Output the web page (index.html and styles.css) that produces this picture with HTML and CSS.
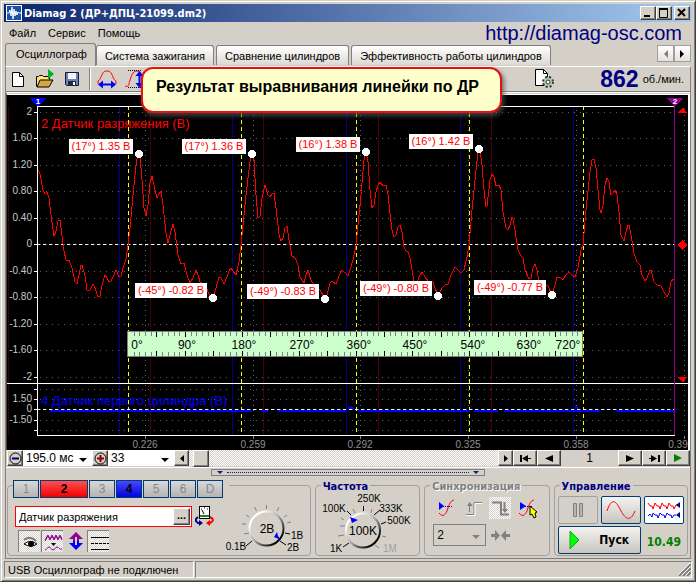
FILE: index.html
```html
<!DOCTYPE html>
<html lang="ru">
<head>
  <meta charset="UTF-8" />
  <title>Diamag 2</title>
  <link rel="stylesheet" href="styles.css">
</head>
<body>
<div class="window">
  <header class="titlebar">
    <svg class="app-icon" width="16" height="16" viewBox="0 0 16 16"><rect width="16" height="16" fill="#fff"/><rect x="1" y="1" width="14" height="14" fill="#1c50a8"/><path d="M1 8h2l1-3 1 6 1-9 1 12 1-10 1 7 1-5 1 4 1-3 1 1h2" fill="none" stroke="#fff"/></svg>
    <h1>Diamag 2 (ДР+ДПЦ-21099.dm2)</h1>
    <div class="win-buttons">
      <button class="btn3d" aria-label="Свернуть"><svg width="12" height="10"><path d="M2 8h6" stroke="#000" stroke-width="2"/></svg></button>
      <button class="btn3d" aria-label="Развернуть"><svg width="12" height="10"><path d="M1.500 1v8.500h8v-8.500" fill="none" stroke="#000"/><path d="M1 1h9" stroke="#000" stroke-width="2"/></svg></button>
      <button class="btn3d close" aria-label="Закрыть"><svg width="12" height="10"><path d="M2 1l7 7M9 1l-7 7" stroke="#000" stroke-width="2"/></svg></button>
    </div>
  </header>

  <nav class="menu">
    <button>Файл</button>
    <button>Сервис</button>
    <button>Помощь</button>
    <a href="http://diamag-osc.com">http://diamag-osc.com</a>
  </nav>

  <div class="tabs">
    <button class="tab active">Осциллограф</button>
    <button class="tab">Система зажигания</button>
    <button class="tab">Сравнение цилиндров</button>
    <button class="tab">Эффективность работы цилиндров</button>
    <div class="tab-scroll">
      <button aria-label="Назад"><svg width="5" height="8"><path d="M5 0v8L1 4z" fill="#808080"/></svg></button>
      <button aria-label="Вперёд"><svg width="5" height="8"><path d="M0 0v8L4 4z"/></svg></button>
    </div>
  </div>

  <main class="page">
    <div class="toolbar">
      <button class="tool" aria-label="Новый"><svg width="20" height="20" viewBox="8 69 20 20"><path d="M12.500 72.500h7l4 4v10h-11z" fill="#fff" stroke="#000"/><path d="M19.500 72.500v4h4" fill="none" stroke="#000"/></svg></button>
      <button class="tool" aria-label="Открыть"><svg width="20" height="20" viewBox="35 69 20 20"><path d="M36.500 86.500v-10h2l1-1h3l1 1h6v3" fill="#ffe27a" stroke="#000"/><path d="M37 87l3-7h13l-4 7z" fill="#d8a840" stroke="#000"/><path d="M48 69v10l6-5z" fill="#00b020"/></svg></button>
      <button class="tool" aria-label="Сохранить"><svg width="20" height="20" viewBox="62 69 20 20"><path d="M65.500 72.500h13v13h-12l-1-1z" fill="#7080b8" stroke="#101838"/><path d="M68 73h8v6h-8z" fill="#f4f4ff"/><path d="M68 81h8v5h-8z" fill="#202840"/><path d="M73 82h2v3h-2z" fill="#fff"/></svg></button>
      <span class="sep"></span>
      <button class="tool" aria-label="По ширине"><svg width="20" height="20" viewBox="97 69 20 20"><path d="M98 84v-3c2-1 2-2 3-4 2-5 3-6 6-6s4 1 6 6c1 2 1 3 3 4v3" fill="none" stroke="#f00"/><path d="M102 84.500h10" stroke="#00f" stroke-width="2"/><path d="M98 84.500l5-4v8zM116 84.500l-5-4v8z" fill="#00f"/></svg></button>
      <button class="tool" aria-label="По высоте"><svg width="20" height="20" viewBox="123 69 20 20"><path d="M127 70.500h14M127 87.500h14" stroke="#000" stroke-dasharray="1 1"/><path d="M124 86c4 2 4-3 5-6 2-7 4-9 7-9s4 3 6 9" fill="none" stroke="#f00"/><path d="M138.500 74v10" stroke="#00f" stroke-width="2"/><path d="M138.500 71l-4 5h8zM138.500 88l-4-5h8z" fill="#00f"/></svg></button>
      <button class="tool settings" aria-label="Настройки"><svg width="20" height="20" viewBox="534 69 20 20"><path d="M535.500 69.500h8l4 4v12h-12z" fill="#fff" stroke="#000"/><path d="M543.500 69.500v4h4" fill="none" stroke="#000"/><circle cx="548" cy="82" r="5" fill="#b8ccb8" stroke="#303830" stroke-width="2" stroke-dasharray="2 2"/><circle cx="548" cy="82" r="2" fill="#fff" stroke="#303830"/></svg></button>
      <p class="rpm"><b>862</b> об./мин.</p>
      <div class="callout">Результат выравнивания линейки по ДР</div>
    </div>

    <div class="scope">
      <svg id="scope" viewBox="7 95 681 355">
        <rect x="7" y="95" width="681" height="355" fill="#000"/>
        <g id="grid"></g>
        <path d="M8.500 106V435" stroke="#400000"/>
        <path d="M119.500 106V435M232.500 106V435M346.500 106V435M460.500 106V435M573.500 106V435" stroke="#00008b"/>
        <path d="M150.500 106V435M263.500 106V435M378.500 106V435M491.500 106V435" stroke="#480000"/>
        <g class="channel-name">
          <text x="41" y="128" fill="#f00">2 Датчик разряжения (В)</text>
          <text x="41" y="405" fill="#0000ff">4 Датчик первого цилиндра (В)</text>
        </g>
        <path d="M128.500 106V433M241.500 106V433M356.500 106V433M469.500 106V433M583.500 106V433" stroke="#ff0" stroke-dasharray="4 3"/>
        <path d="M37 106.500H675M37.500 106V436M37 435.500H675M7 383.500H688" stroke="#fff"/>
        <path d="M50 410.500H252M262 410.500H268M278 410.500H346M358 410.500H470M474 410.500H498M504 410.500H600M616 410.500H675" stroke="#00f" stroke-width="2"/>
        <path d="M348 409v-3l2 2 1-2 2 2h2v1zM575 409v-4l2 2 2 1v1z" fill="#00f"/>
        <path d="M37 244.500H675M37 409.500H675" stroke="#fff" stroke-dasharray="3 3"/>
        <g id="wave"></g>
        <path d="M674.500 100V435" stroke="#900090"/>
        <g id="ruler"></g>
        <g id="peaks"></g>
        <path d="M29 98h17l-8 8z" fill="#00f"/>
        <path d="M666 98h17l-8 8z" fill="#900090"/>
        <g class="flag"><text x="38" y="104">1</text><text x="675" y="104">2</text></g>
        <path d="M678 113h9l-4-6zM678 377h9l-4 6zM682.500 240l5 5-5 5-5-5z" fill="#f00"/>
      </svg>
    </div>

    <div class="scrollrow">
      <button class="btn3d zoom" aria-label="Уменьшить"><svg width="13" height="13"><circle cx="6.500" cy="6.500" r="5.500" fill="none" stroke="#000"/><path d="M3 6.500h7" stroke="#000080" stroke-width="2"/></svg></button>
      <div class="combo time"><select aria-label="Время"><option>195.0 мс</option></select></div>
      <button class="btn3d zoom" aria-label="Увеличить"><svg width="13" height="13"><circle cx="6.500" cy="6.500" r="5.500" fill="none" stroke="#000"/><path d="M3 6.500h7M6.500 3v7" stroke="#900000" stroke-width="2"/></svg></button>
      <div class="combo count"><select aria-label="Масштаб"><option>33</option></select></div>
      <button class="btn3d left" aria-label="Влево"><svg width="4" height="7"><path d="M4 0v7L0 3.500z"/></svg></button>
      <input class="scroll" type="range" min="0" max="290" value="4" aria-label="Прокрутка">
      <button class="btn3d" aria-label="Вправо"><svg width="4" height="7"><path d="M0 0v7l4-3.500z"/></svg></button>
      <button class="btn3d nav" aria-label="Первый"><svg width="11" height="7"><path d="M0 0h2v7H0zM8 0v7L2 3.500zM8 3h3v1H8z"/></svg></button>
      <button class="btn3d nav" aria-label="Предыдущий"><svg width="9" height="7"><path d="M8 0v7L0 3.500z"/></svg></button>
      <output class="frame-no">1</output>
      <button class="btn3d nav" aria-label="Следующий"><svg width="9" height="7"><path d="M0 0v7l8-3.500z"/></svg></button>
      <button class="btn3d nav" aria-label="Последний"><svg width="11" height="7"><path d="M9 0h2v7H9zM2 0v7l6-3.500zM0 3h2v1H0z"/></svg></button>
      <button class="btn3d nav" aria-label="Воспроизвести"><svg width="9" height="8"><path d="M0 0v8l8-4z" fill="#008000"/></svg></button>
    </div>

    <button class="splitter" aria-label="Свернуть панель"><i></i><span></span><i></i></button>

    <div class="panels">
      <section class="group channels">
        <div class="channel-row">
          <button>1</button><button class="red">2</button><button>3</button><button class="blue">4</button><button>5</button><button>6</button><button>D</button>
        </div>
        <div class="channel-body">
          <div class="channel-left">
            <div class="sensor-row">
              <div class="sensor"><input type="text" value="Датчик разряжения" aria-label="Датчик"><button class="btn3d" aria-label="Выбрать">...</button></div>
              <button class="tool" aria-label="Калибровка"><svg width="20" height="20" viewBox="195 508 20 20"><rect x="199.500" y="508.500" width="10" height="12" fill="#fff" stroke="#000"/><path d="M200 517h9v2h-9z" fill="#208030"/><path d="M204 516l-2-4M201 511h1M204 510h1M207 511h1" stroke="#000"/><path d="M198 519c-3 2-3 4 0 6h2" fill="none" stroke="#000080" stroke-width="2"/><path d="M199 522v6l4-3z" fill="#000080"/><path d="M210 519c4 2 4 4 0 6h-1" fill="none" stroke="#f00" stroke-width="2"/><path d="M210 522v6l-4-3z" fill="#f00"/></svg></button>
            </div>
            <div class="toggle-row">
              <button class="toggle" aria-label="Показать"><svg width="20" height="20" viewBox="0 0 20 20"><path d="M4 8q6-5 12 1" fill="none" stroke="#777" stroke-width="2"/><path d="M4 12q6-5 13 0-6 4-13 0z" fill="#fff" stroke="#000"/><circle cx="11" cy="12" r="3"/></svg></button>
              <button class="toggle" aria-label="Сглаживание"><svg width="20" height="20" viewBox="0 0 20 20"><path d="M2 8l3-5 2 4 2-4 2 4 2-4 2 4 2-4 2 4" fill="none" stroke="#900090"/><path d="M2 9l3-5 2 4 2-4 2 4 2-4 2 4 2-4 2 4" fill="none" stroke="#900090"/><path d="M8 11h5l-2.500 3z"/><path d="M2 18c2 0 2-3 4-3s2 3 4 3 2-3 4-3 2 3 5 2" fill="none" stroke="#900090"/></svg></button>
              <button class="plain" aria-label="Инвертировать"><svg width="16" height="20" viewBox="0 0 16 20"><path d="M8 1l7 7h-4v2H5V8H1z" fill="#900090"/><path d="M8 19l7-7h-4v-2H5v2H1z" fill="#00f"/><path d="M8 6v8" stroke="#d4d0c8" stroke-width="2"/></svg></button>
              <button class="toggle" aria-label="Уровни"><svg width="20" height="20" viewBox="0 0 20 20"><path d="M2 5.500h18M2 17.500h18" stroke="#000"/><path d="M2 11.500h18" stroke="#000" stroke-dasharray="3 1"/></svg></button>
            </div>
          </div>
          <svg class="knob" width="92" height="55" viewBox="216 500 92 55">
            <defs><linearGradient id="rim" x1="0" y1="0" x2="1" y2="1"><stop offset="0.200" stop-color="#fff"/><stop offset="0.500" stop-color="#a8a8a8"/><stop offset="0.850" stop-color="#000"/></linearGradient></defs>
            <path d="M260.500 511v-4M250.500 513l-2-4M271 513l2-4M243 519l-3-2M278 519l3-2M240 526h-4M281 525l4-1M238 536l5-1" stroke="#808080"/>
            <path d="M246 543l-6 5M274 543l6 4M279 535l5 1" fill="none" stroke="#000"/>
            <circle cx="260.500" cy="530.500" r="17" fill="#d4d0c8" stroke="url(#rim)" stroke-width="2"/>
            <path d="M268 539l3-5 1 4 3 4z" fill="#00f"/>
            <text class="big" x="261" y="535">2В</text>
            <text x="230" y="552">0.1В</text><text x="291" y="541">1В</text><text x="287" y="553">2В</text>
          </svg>
        </div>
      </section>

      <section class="group freq">
        <h2>Частота</h2>
        <svg class="knob" width="102" height="62" viewBox="317 492 102 62">
          <path d="M356 513l-2-4M372 513l1-4M346 526h-5M345 520l-3-2M345 535l-6 1M383 536l4 1M376 545l4 3" stroke="#808080"/>
          <path d="M364.500 511v-5M352 515l-4-4M375 515l6-5M382 524l5-2M350 543l-6 4" stroke="#000"/>
          <circle cx="364" cy="530.500" r="17" fill="#d4d0c8" stroke="url(#rim)" stroke-width="2"/>
          <path d="M351 517l8 3-6 3z" fill="#00f"/>
          <text class="big" x="364" y="535">100K</text>
          <text x="370" y="502">250K</text><text x="335" y="512">100K</text><text x="392" y="512">333K</text><text x="400" y="524">500K</text><text x="337" y="552">1K</text><text class="off" x="391" y="552">1M</text>
        </svg>
      </section>

      <section class="group sync">
        <h2>Синхронизация</h2>
        <div class="sync-icons">
          <button aria-label="Уровень"><svg width="22" height="22" viewBox="0 0 22 22"><path d="M4 16c4 5 7 2 9-5 2-6 3-7 6-8" fill="none" stroke="#f00"/><path d="M6 9.500h12" stroke="#00f" stroke-dasharray="1 1"/><path d="M4 5v8l5-4z" fill="#00f"/></svg></button>
          <button aria-label="Фронт"><svg width="22" height="22" viewBox="0 0 22 22"><path d="M4 17.500h8v-12h8M7.500 15V6" fill="none" stroke="#808080"/><path d="M4 18.500h9v-12h7" fill="none" stroke="#fff"/><path d="M5 9h6L7.500 5z" fill="#808080"/></svg></button>
          <button class="on" aria-label="Спад"><svg width="22" height="22" viewBox="0 0 22 22"><path d="M3 5.500h9v12h8M15.500 5v8" fill="none" stroke="#808080" stroke-width="2"/><path d="M13 12h6l-3 4z" fill="#808080"/></svg></button>
          <button aria-label="Установить"><svg width="22" height="22" viewBox="0 0 22 22"><path d="M2 16c4 5 7 2 9-5 2-6 3-7 6-8" fill="none" stroke="#f00"/><path d="M8 9.500h8" stroke="#00f" stroke-dasharray="1 1"/><path d="M3 5v8l6-4z" fill="#00f"/><path d="M13 9v9l2-1 2 4 2-1-1-4 2-1z" fill="#ff0" stroke="#000"/></svg></button>
        </div>
        <div class="sync-row">
          <div class="combo disabled"><select aria-label="Канал синхронизации" disabled><option>2</option></select></div>
          <svg width="20" height="11"><path d="M0 4h4V0l5 5.500L4 11V7H0zM19 4h-4V0l-5 5.500 5 5.500V7h4z" fill="#808080"/></svg>
        </div>
      </section>

      <section class="group control">
        <h2>Управление</h2>
        <div class="control-grid">
          <button class="xp dim" aria-label="Пауза"><svg width="12" height="16"><path d="M1.500 1.500h3v13h-3zM7.500 1.500h3v13h-3z" fill="#b4b4b4" stroke="#808080"/></svg></button>
          <button class="xp" aria-label="Один канал"><svg width="32" height="20"><path d="M2 11C6-1 10-1 15 9s10 14 15 2" fill="none" stroke="#f00"/></svg></button>
          <button class="xp lit" aria-label="Два канала"><svg width="34" height="20"><path d="M1 3l2 3 2 0 1 3 2-6 2 3 2 0 1 3 2-6 2 3 2 0 1 3 2-6 2 3 2 0 1 3 2-4h2" fill="none" stroke="#f00"/><path d="M1 16l2-2 2 3 1-4 2 2 2 0 1 3 2-5 2 2 2 0 1 3 2-5 2 2 2 0 1 3 2-3h2" fill="none" stroke="#00f"/><path d="M33 2v6l-4-3zM33 12v6l-4-3z" fill="#000080"/></svg></button>
          <button class="xp start"><svg width="11" height="20"><path d="M1 1v18l9-9z" fill="#0f0" stroke="#20a020"/></svg>Пуск</button>
          <output>10.49</output>
        </div>
      </section>
    </div>
  </main>

  <footer class="status">
    <div>USB Осциллограф не подключен</div>
    <div><svg width="13" height="13"><path d="M1 13L13 1M5 13l8-8M9 13l4-4" stroke="#808080" stroke-width="2"/><path d="M0 12L12 0M4 12l8-8M8 12l4-4" stroke="#fff"/></svg></div>
  </footer>
</div>
<script src="scope.js"></script>
</body>
</html>
```
FILE: styles.css
```css
* {
  box-sizing: border-box;
}

body {
  margin: 0;
  background: #d4d0c8;
  font-family: "Liberation Sans", Arial, sans-serif;
  font-size: 11px;
  color: #000;
}

button, select, input {
  font: inherit;
  color: inherit;
  margin: 0;
  padding: 0;
  border-radius: 0;
}

button {
  display: flex;
  align-items: center;
  justify-content: center;
  border: 0;
  background: none;
}

svg {
  display: block;
  flex: none;
}

h1, h2, p {
  margin: 0;
  font-size: 11px;
}

.window {
  background: #d4d0c8;
  border: 1px solid;
  border-color: #d4d0c8 #404040 #404040 #d4d0c8;
  box-shadow: inset 1px 1px #fff, inset -1px -1px #808080;
  padding: 3px;
}

.btn3d {
  background: #d4d0c8;
  border: 1px solid;
  border-color: #fff #404040 #404040 #fff;
  box-shadow: inset -1px -1px #808080;
}

/* title and menu */
.titlebar {
  display: flex;
  align-items: center;
  height: 18px;
  padding: 0 2px;
  gap: 2px;
  background: linear-gradient(to right, #0a246a, #a6caf0);
  color: #fff;
}

.titlebar h1 {
  font-family: "DejaVu Sans Condensed", "DejaVu Sans", sans-serif;
}

.win-buttons {
  display: flex;
  margin-left: auto;
}

.win-buttons button {
  width: 16px;
  height: 14px;
}

.win-buttons .close {
  margin-left: 2px;
}

.menu {
  display: flex;
  align-items: center;
  gap: 12px;
  height: 21px;
  padding: 0 10px 0 5px;
}

.menu a {
  margin-left: auto;
  font-size: 20px;
  line-height: 20px;
  color: #000080;
  text-decoration: none;
}

/* tabs */
.tabs {
  display: flex;
  align-items: flex-end;
  gap: 2px;
  height: 23px;
  padding: 0 1px;
}

.tab {
  height: 20px;
  margin-bottom: 1px;
  padding: 0 8px;
  white-space: nowrap;
  border: 1px solid #808080;
  border-bottom: 0;
  border-radius: 3px 3px 0 0;
  background: linear-gradient(#fff, #dcd9d2);
}

.tab.active {
  height: 23px;
  margin: 0 -2px 0 0;
  padding: 0 8px 2px 10px;
  background: #d4d0c8;
}

.tab-scroll {
  display: flex;
  align-self: flex-start;
  margin: 2px 0 0 auto;
}

.tab-scroll button {
  width: 17px;
  height: 17px;
  border: 1px solid #a0a0a0;
  background: linear-gradient(#fff, #e4e2dc);
}

/* page */
.page {
  margin: 0 1px;
  border: 1px solid #808080;
  border-top: 1px solid #fff;
}

.toolbar {
  position: relative;
  display: flex;
  align-items: center;
  height: 25px;
  padding: 0 6px 0 2px;
  border-bottom: 1px solid #808080;
}

.tool {
  width: 20px;
  height: 20px;
  margin-right: 7px;
}

.sep {
  width: 2px;
  height: 22px;
  margin: 0 6px 0 0;
  border-left: 1px solid #808080;
  border-right: 1px solid #fff;
}

.settings {
  margin: 0 0 0 auto;
}

.rpm {
  display: flex;
  align-items: center;
  gap: 4px;
  margin-left: 46px;
}

.rpm b {
  font-size: 23px;
  line-height: 24px;
  color: #000080;
}

.callout {
  position: absolute;
  z-index: 2;
  left: 135px;
  top: 0;
  width: 361px;
  height: 46px;
  padding: 8px 13px;
  border: 2px solid #e81010;
  border-radius: 12px;
  background: #ffffcc;
  box-shadow: 2px 3px 5px rgba(80, 80, 80, 0.8);
  font-size: 16px;
  font-weight: bold;
  line-height: 20px;
  white-space: nowrap;
}

/* oscilloscope screen */
.scope {
  border: solid;
  border-width: 3px 2px 0 1px;
  border-color: #fff #fff #fff #404040;
  border-top-style: double;
}

.scope svg {
  width: 100%;
  height: auto;
  font-size: 10px;
  shape-rendering: crispEdges;
}

.axis-y {
  fill: #c8c8c8;
  text-anchor: end;
}

.axis-x {
  fill: #909090;
  text-anchor: middle;
}

.channel-name {
  font-size: 13px;
}

.peak {
  fill: #f00;
  font-size: 11px;
  text-anchor: middle;
}

.degree {
  font-size: 12px;
  text-anchor: middle;
}

.flag {
  fill: #fff;
  font-size: 8px;
  font-weight: bold;
  text-anchor: middle;
}

/* scroll row */
.scrollrow {
  display: flex;
  height: 18px;
  padding: 0 0 1px 1px;
  border-bottom: 1px solid #fff;
  font-size: 12px;
}

.scrollrow .btn3d {
  width: 15px;
}

.scrollrow .zoom {
  width: 16px;
}

.scrollrow .nav {
  width: 24px;
}

.combo {
  position: relative;
  background: #fff;
}

.combo select {
  width: 100%;
  height: 100%;
  padding: 0 3px;
  border: 0;
  background: none;
  appearance: none;
  opacity: 1;
}

.combo::after {
  content: "";
  position: absolute;
  right: 5px;
  top: 50%;
  border: 4px solid transparent;
  border-top-color: #000;
  border-bottom: 0;
  pointer-events: none;
}

.time {
  width: 69px;
}

.count {
  width: 66px;
}

.scroll {
  flex: 1;
  min-width: 0;
  appearance: none;
  background: repeating-conic-gradient(#fff 0 25%, #d4d0c8 0 50%) 0 0 / 2px 2px;
}

.scroll::-webkit-slider-thumb {
  appearance: none;
  width: 16px;
  height: 17px;
  background: #d4d0c8;
  border: 1px solid;
  border-color: #fff #404040 #404040 #fff;
  box-shadow: inset -1px -1px #808080;
}

.frame-no {
  width: 57px;
  text-align: center;
  line-height: 17px;
}

.splitter {
  width: 274px;
  height: 7px;
  margin: 1px auto 0;
  padding: 0 5px;
  gap: 4px;
  border: 1px solid #808080;
}

.splitter i {
  border: 3px solid transparent;
  border-top-color: #0a246a;
  border-bottom: 0;
}

.splitter span {
  flex: 1;
  border-top: 1px dotted #0a246a;
}

/* control panels */
.panels {
  display: grid;
  grid-template-columns: 305fr 106fr 126fr 135fr;
  gap: 4px;
  padding: 9px 2px 2px 1px;
}

.group {
  height: 71px;
  min-width: 0;
  border: 1px solid #a0a0a0;
  border-radius: 4px;
}

.group h2 {
  width: max-content;
  height: 14px;
  margin: -8px 0 0 5px;
  padding: 0 2px;
  line-height: 18px;
  background: #d4d0c8;
  font-family: "DejaVu Sans Condensed", "DejaVu Sans", sans-serif;
  color: #000080;
}

.channel-row {
  display: flex;
  gap: 1px;
  width: max-content;
  margin: -6px 0 0 5px;
  padding-right: 6px;
  background: #d4d0c8;
  font-size: 12px;
}

.channel-row button {
  width: 26px;
  height: 18px;
  border: 1px solid #003c74;
  background: linear-gradient(#d8d8d8, #b4b4b4);
  color: #888;
}

.channel-row .red {
  width: 48px;
  background: linear-gradient(#ff5050, #f00000);
  color: #000;
  font-weight: bold;
}

.channel-row .blue {
  background: linear-gradient(#4848ff, #0000e0);
  color: #000;
  font-weight: bold;
}

.channel-body {
  display: flex;
  justify-content: space-between;
}

.channel-left {
  padding: 8px 0 0 7px;
}

.sensor-row, .toggle-row {
  display: flex;
}

.sensor {
  display: flex;
  width: 177px;
  height: 21px;
  margin-right: 3px;
  padding: 1px;
  border: 1px solid #f00;
  background: #fff;
}

.sensor input {
  flex: 1;
  min-width: 0;
  padding: 0 2px;
  border: 0;
  background: none;
}

.sensor button {
  width: 17px;
  padding-bottom: 4px;
  font-weight: bold;
}

.toggle-row {
  padding: 3px 0 0 3px;
  gap: 1px;
}

.toggle {
  width: 22px;
  height: 22px;
  border-left: 1px solid #808080;
  border-top: 1px solid #808080;
  background: repeating-conic-gradient(#fff 0 25%, #d4d0c8 0 50%) 0 0 / 2px 2px;
}

.plain {
  margin: 0 2px 0 4px;
}

.knob {
  font-size: 10px;
  text-anchor: middle;
}

.knob .big {
  font-size: 12px;
}

.knob .off {
  fill: #a0a0a0;
}

.freq .knob {
  margin: 0 auto;
}

.sync h2 {
  color: #808080;
  text-shadow: 1px 1px #fff;
}

.sync-icons {
  display: flex;
  justify-content: space-between;
  padding: 5px 10px 0;
}

.sync-icons .on {
  background: repeating-conic-gradient(#fff 0 25%, #d4d0c8 0 50%) 0 0 / 2px 2px;
}

.sync-row {
  display: flex;
  align-items: center;
  gap: 5px;
  padding: 5px 8px 0;
}

.combo.disabled {
  width: 53px;
  height: 22px;
  border: 1px solid #808080;
  background: none;
  font-size: 12px;
}

.combo.disabled::after {
  border-top-color: #808080;
}

.control-grid {
  display: grid;
  grid-template-columns: repeat(3, 1fr);
  gap: 2px 3px;
  padding: 4px 3px 0;
}

.xp {
  height: 28px;
  border: 1px solid #003c74;
  border-radius: 2px;
  background: linear-gradient(#f4f3f0, #c8c5be);
}

.xp.dim {
  border-color: #a0a0a0;
  background: none;
}

.xp.lit {
  background: #fff;
}

.start {
  grid-column: span 2;
  gap: 19px;
  font-family: "DejaVu Sans Condensed", "DejaVu Sans", sans-serif;
  font-size: 12px;
  font-weight: bold;
}

.control-grid output {
  align-self: center;
  padding-top: 4px;
  text-align: center;
  font-family: "DejaVu Sans Condensed", "DejaVu Sans", sans-serif;
  font-size: 12px;
  font-weight: bold;
  color: #008000;
}

/* status bar */
.status {
  display: flex;
  gap: 1px;
  margin-top: 2px;
}

.status div {
  display: flex;
  flex: 1;
  align-items: center;
  justify-content: flex-end;
  height: 17px;
  white-space: nowrap;
  border: 1px solid;
  border-color: #808080 #fff #fff #808080;
}

.status div:first-child {
  flex: none;
  width: 190px;
  justify-content: flex-start;
  padding-left: 3px;
}
```
FILE: scope.js
```js
const NS = "http://www.w3.org/2000/svg";

function add(parent, tag, attrs, text) {
  const el = document.createElementNS(NS, tag);
  for (const key in attrs) el.setAttribute(key, attrs[key]);
  if (text) el.textContent = text;
  document.getElementById(parent).appendChild(el);
}

// horizontal grid: [y, label]
const rows = [
  [112, "2"], [138, "1.60"], [165, "1.20"], [191, "0.80"], [218, "0.40"], [244, "0"],
  [271, "-0.40"], [297, "-0.80"], [324, "-1.20"], [350, "-1.60"], [377, "-2"],
  [389, ""], [399, "1.50"], [409, "0"], [420, "-1.50"], [430, ""]
];
rows.forEach(([y, label]) => {
  add("grid", "path", { d: `M40 ${y + 0.5}H675`, stroke: "#606060", "stroke-dasharray": "1 5" });
  add("grid", "path", { d: `M34 ${y + 0.5}H38`, stroke: "#fff" });
  if (label) add("grid", "text", { x: 32, y: y + 3, class: "axis-y" }, label);
});

// vertical grid: [x, label, label centre]
const cols = [
  [145, "0.226", 145], [253, "0.259", 253], [360, "0.292", 360],
  [468, "0.325", 468], [576, "0.358", 576], [684, "0.39", 678]
];
cols.forEach(([x, label, center]) => {
  add("grid", "path", { d: `M${x + 0.5} 110V434`, stroke: "#606060", "stroke-dasharray": "1 4" });
  add("grid", "path", { d: `M${x + 0.5} 436V439`, stroke: "#808080" });
  add("grid", "text", { x: center, y: 448, class: "axis-x" }, label);
});

// vacuum sensor signal
const wave = `38,170 40,174 43,190 45,194 47,192 49,198 51,215 54,236 56,231 58,221 60,220 62,236 64,251 66,260
69,260 72,268 75,282 77,284 79,275 81,265 82,265 85,276 87,290 90,290 93,284 95,288 98,297 100,296 102,285
105,275 107,278 109,282 111,281 113,277 116,270 119,277 121,276 123,268 126,259 128,245 130,228 133,195
136,165 138,154 140,156 142,180 144,208 146,216 148,205 150,183 152,176 155,190 157,198 159,194 161,191
163,205 166,233 168,243 170,235 173,224 175,232 178,255 181,264 184,263 187,275 190,283 193,278 196,270
198,275 200,282 205,285 210,296 213,298 216,288 219,277 221,278 224,284 227,277 229,271 231,268 233,271
236,275 239,262 241,245 246,195 250,162 252,154 254,160 256,195 258,218 260,216 262,198 265,185 268,195
270,197 272,194 274,193 276,208 279,234 281,241 283,238 285,228 287,226 289,240 292,256 295,258 298,265
300,277 304,283 306,275 308,270 311,280 314,285 320,290 325,299 327,295 330,283 332,281 336,284 339,276
342,270 345,273 348,276 350,270 353,260 356,245 361,195 364,160 366,152 368,162 370,190 372,208 374,205
376,192 378,185 380,182 383,186 386,185 388,195 390,213 392,230 394,237 396,235 398,227 400,225 402,232
404,247 406,251 408,252 410,258 412,270 414,282 417,282 420,275 422,272 425,277 428,281 433,282 438,296
442,288 445,285 448,284 451,275 455,267 458,270 461,273 464,270 467,257 469,245 472,210 476,170 478,152
480,150 482,165 484,190 486,207 487,206 490,180 492,174 494,177 496,186 499,185 501,190 503,212 506,228
508,230 510,225 512,217 513,219 515,230 518,250 521,256 523,258 525,270 529,279 531,278 533,268 535,264
537,270 539,282 542,285 548,286 552,295 555,285 557,277 560,277 563,280 566,275 569,272 572,275 575,277
578,268 581,250 583,245 586,210 590,172 592,160 594,159 596,168 598,190 600,210 601,213 603,205 605,185
607,178 609,182 611,195 613,193 615,190 617,195 619,212 621,235 624,241 626,232 628,225 629,225 631,235
634,253 637,262 640,265 642,275 645,281 647,278 650,270 651,270 654,282 657,285 661,286 664,292 667,297
669,293 671,282 673,279 674,279`;
add("wave", "polyline", { points: wave, fill: "none", stroke: "#f00" });

// degree ruler, 9 degrees per tick
add("ruler", "rect", { x: 127.5, y: 331.5, width: 455, height: 25, fill: "#ccffcc", stroke: "#808080" });
for (let i = 1; i < 80; i++) {
  const x = Math.round(128 + i * 455 / 80) + 0.5;
  const major = i % 5 === 0;
  const len = major ? 5 : 4;
  add("ruler", "path", { d: `M${x} 332v${len}M${x} 356v-${len}`, stroke: major ? "#000" : "#808080" });
}
[137, 187, 244, 302, 359, 415, 473, 529, 568].forEach((x, i) => {
  add("ruler", "text", { x: x, y: 349, class: "degree" }, i * 90 + "°");
});

// peaks: label x, label y, label width, point x, point y, text
const peaks = [
  [69, 139, 64, 139, 154, "(17°) 1.35 В"],
  [182, 139, 64, 252, 154, "(17°) 1.36 В"],
  [296, 137, 64, 366, 152, "(16°) 1.38 В"],
  [409, 134, 64, 479, 149, "(16°) 1.42 В"],
  [135, 283, 72, 213, 298, "(-45°) -0.82 В"],
  [247, 284, 72, 325, 299, "(-49°) -0.83 В"],
  [360, 281, 72, 438, 296, "(-49°) -0.80 В"],
  [474, 280, 72, 552, 295, "(-49°) -0.77 В"]
];
peaks.forEach(([x, y, w, px, py, label]) => {
  add("peaks", "rect", { x: x, y: y, width: w, height: 15, fill: "#fff" });
  add("peaks", "text", { x: x + w / 2, y: y + 11, class: "peak" }, label);
  add("peaks", "circle", { cx: px, cy: py, r: 4, fill: "#fff" });
});
```
